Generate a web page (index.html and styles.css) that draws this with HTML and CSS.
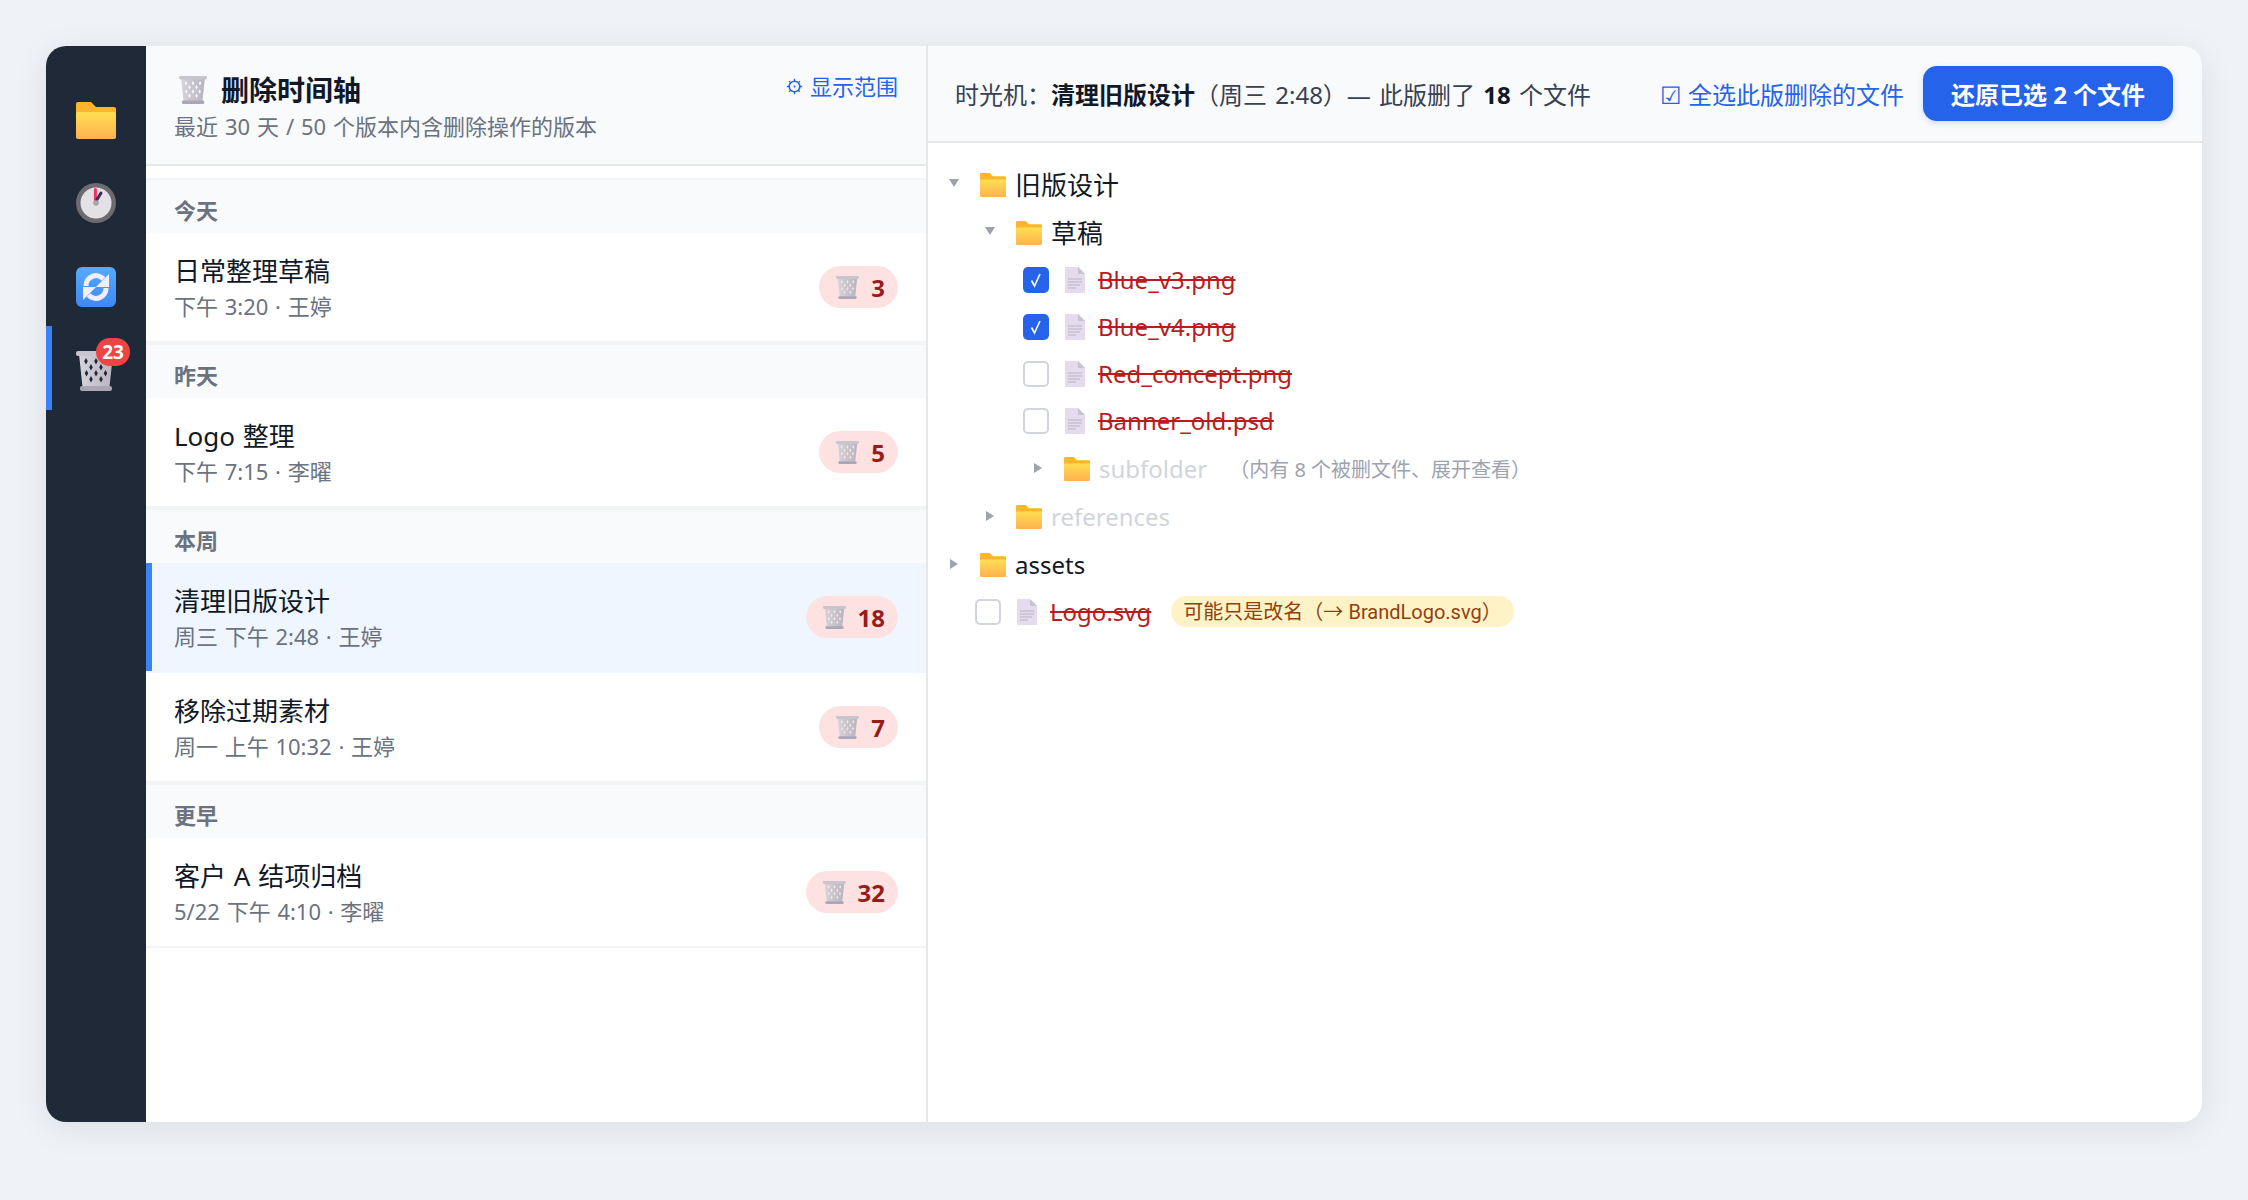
FILE: index.html
```html
<!DOCTYPE html>
<html lang="zh-CN">
<head>
<meta charset="utf-8">
<title>删除时间轴</title>
<link rel="stylesheet" href="styles.css">
</head>
<body>
<svg class="defs" aria-hidden="true">
  <defs>
    <linearGradient id="gf" x1="0" y1="0" x2="0" y2="1"><stop offset="0" stop-color="#ffdf52"/><stop offset="1" stop-color="#ffb24f"/></linearGradient>
    <linearGradient id="gs" x1="0" y1="0" x2="0" y2="1"><stop offset="0" stop-color="#55aaff"/><stop offset="1" stop-color="#4088f2"/></linearGradient>
    <linearGradient id="gt" x1="0" y1="0" x2="1" y2="0"><stop offset="0" stop-color="#d6d3db"/><stop offset="1" stop-color="#b8b4c0"/></linearGradient>
    <symbol id="folder" viewBox="0 0 40 40">
      <path d="M2 3H15L20 8H38a2 2 0 0 1 2 2V16H0V5a2 2 0 0 1 2-2Z" fill="#fbb62e"/>
      <rect y="13" width="40" height="27" rx="2" fill="url(#gf)"/>
    </symbol>
    <symbol id="clock" viewBox="0 0 40 40">
      <circle cx="20" cy="20" r="20" fill="#6d6b70"/>
      <circle cx="20" cy="20" r="15.5" fill="#e3e1e6"/>
      <path d="M19.4 18V6.5" stroke="#f4315b" stroke-width="3" stroke-linecap="round"/>
      <path d="M21 16.5L25 10" stroke="#3a2a66" stroke-width="3" stroke-linecap="round"/>
      <circle cx="20" cy="20" r="2.8" fill="#a6a4aa"/>
    </symbol>
    <symbol id="sync" viewBox="0 0 40 40">
      <rect width="40" height="40" rx="6" fill="url(#gs)"/>
      <path d="M10 19a10 10 0 0 1 17.500-7" fill="none" stroke="#f3eefd" stroke-width="5"/>
      <path d="M33 7V20H20Z" fill="#f3eefd"/>
      <path d="M30 21a10 10 0 0 1-17.500 7" fill="none" stroke="#f3eefd" stroke-width="5"/>
      <path d="M7 33V20H20Z" fill="#f3eefd"/>
    </symbol>
    <symbol id="trash" viewBox="0 0 40 40">
      <path fill-rule="evenodd" fill="url(#gt)" d="M3 3H37L33.500 36H6.500ZM10 7l1.800 3.200-1.800 3.200-1.800-3.200ZM20 7l1.800 3.200-1.800 3.200-1.800-3.200ZM30 7l1.800 3.200-1.800 3.200-1.800-3.200ZM15 13l1.800 3.200-1.800 3.200-1.800-3.200ZM25 13l1.800 3.200-1.800 3.200-1.800-3.200ZM10.500 19l1.800 3.200-1.800 3.200-1.800-3.200ZM20 19l1.800 3.200-1.800 3.200-1.800-3.200ZM29.500 19l1.800 3.200-1.800 3.200-1.800-3.200ZM15 25l1.800 3.200-1.800 3.200-1.800-3.200ZM25 25l1.800 3.200-1.800 3.200-1.800-3.200Z"/>
      <rect x="0" y="0" width="40" height="5" rx="2" fill="#c8c5ce"/>
      <rect x="4" y="35" width="32" height="5" rx="2" fill="#aba6b6"/>
    </symbol>
    <symbol id="file" viewBox="0 0 20 26">
      <path d="M0 0H13L20 7V26H0Z" fill="#e4dcee"/>
      <path d="M13 0L20 7H13Z" fill="#c8c3cf"/>
      <path d="M3 12H17M3 15H17M3 18H15M3 21H11" stroke="#b8b2c2" stroke-width="1.200"/>
    </symbol>
  </defs>
</svg>

<main class="window">
  <nav class="rail">
    <div class="rail-item"><svg class="rail-icon"><use href="#folder"/></svg></div>
    <div class="rail-item"><svg class="rail-icon"><use href="#clock"/></svg></div>
    <div class="rail-item"><svg class="rail-icon"><use href="#sync"/></svg></div>
    <div class="rail-item rail-item-active">
      <svg class="rail-icon"><use href="#trash"/></svg>
      <span class="rail-badge">23</span>
    </div>
  </nav>

  <section class="timeline">
    <header class="tl-head">
      <div class="tl-title-row">
        <h1 class="tl-title"><svg class="tl-title-icon"><use href="#trash"/></svg>删除时间轴</h1>
        <a class="tl-link">
          <svg class="gear" viewBox="0 0 16 16"><circle cx="8" cy="8" r="5" fill="none" stroke="currentColor" stroke-width="1.500"/><circle cx="8" cy="8" r="1" fill="currentColor"/><path d="M8 .8V3M8 13V15.200M.8 8H3M13 8H15.200M3 3L4.200 4.200M11.800 11.800L13 13M3 13L4.200 11.800M11.800 4.200L13 3" stroke="currentColor" stroke-width="1.300"/></svg>
          显示范围
        </a>
      </div>
      <p class="tl-sub">最近 30 天 / 50 个版本内含删除操作的版本</p>
    </header>
    <div class="tl-list">
      <div class="tl-group">今天</div>
      <div class="tl-item">
        <div><div class="tl-name">日常整理草稿</div><div class="tl-meta">下午 3:20 · 王婷</div></div>
        <span class="tl-count"><svg class="tl-count-icon"><use href="#trash"/></svg>3</span>
      </div>
      <div class="tl-group">昨天</div>
      <div class="tl-item">
        <div><div class="tl-name">Logo 整理</div><div class="tl-meta">下午 7:15 · 李曜</div></div>
        <span class="tl-count"><svg class="tl-count-icon"><use href="#trash"/></svg>5</span>
      </div>
      <div class="tl-group">本周</div>
      <div class="tl-item tl-item-active">
        <div><div class="tl-name">清理旧版设计</div><div class="tl-meta">周三 下午 2:48 · 王婷</div></div>
        <span class="tl-count"><svg class="tl-count-icon"><use href="#trash"/></svg>18</span>
      </div>
      <div class="tl-item">
        <div><div class="tl-name">移除过期素材</div><div class="tl-meta">周一 上午 10:32 · 王婷</div></div>
        <span class="tl-count"><svg class="tl-count-icon"><use href="#trash"/></svg>7</span>
      </div>
      <div class="tl-group">更早</div>
      <div class="tl-item">
        <div><div class="tl-name">客户 A 结项归档</div><div class="tl-meta">5/22 下午 4:10 · 李曜</div></div>
        <span class="tl-count"><svg class="tl-count-icon"><use href="#trash"/></svg>32</span>
      </div>
    </div>
  </section>

  <section class="detail">
    <header class="dt-head">
      <div class="dt-summary">时光机&#xFF1A;<b>清理旧版设计</b>&#xFF08;周三 2:48&#xFF09;— 此版删了 <b>18</b> 个文件</div>
      <div class="dt-actions">
        <a class="dt-selectall">☑ 全选此版删除的文件</a>
        <button class="dt-restore">还原已选 2 个文件</button>
      </div>
    </header>
    <div class="tree">
      <div class="row-folder lv0"><i class="arrow-down"></i><svg class="folder"><use href="#folder"/></svg><span class="name-folder">旧版设计</span></div>
      <div class="row-folder lv1"><i class="arrow-down"></i><svg class="folder"><use href="#folder"/></svg><span class="name-folder">草稿</span></div>
      <div class="row-file flv2"><span class="check check-on"><svg viewBox="0 0 26 26"><path d="M8.500 13.500L11.500 19L17 7" fill="none" stroke="#fff" stroke-width="1.600"/></svg></span><svg class="file"><use href="#file"/></svg><span class="name-del">Blue_v3.png</span></div>
      <div class="row-file flv2"><span class="check check-on"><svg viewBox="0 0 26 26"><path d="M8.500 13.500L11.500 19L17 7" fill="none" stroke="#fff" stroke-width="1.600"/></svg></span><svg class="file"><use href="#file"/></svg><span class="name-del">Blue_v4.png</span></div>
      <div class="row-file flv2"><span class="check"></span><svg class="file"><use href="#file"/></svg><span class="name-del">Red_concept.png</span></div>
      <div class="row-file flv2"><span class="check"></span><svg class="file"><use href="#file"/></svg><span class="name-del">Banner_old.psd</span></div>
      <div class="row-folder lv2"><i class="arrow-right"></i><svg class="folder"><use href="#folder"/></svg><span class="name-latin name-muted">subfolder</span><span class="note">&#xFF08;内有 8 个被删文件、展开查看&#xFF09;</span></div>
      <div class="row-folder lv1"><i class="arrow-right"></i><svg class="folder"><use href="#folder"/></svg><span class="name-latin name-muted">references</span></div>
      <div class="row-folder lv0"><i class="arrow-right"></i><svg class="folder"><use href="#folder"/></svg><span class="name-latin">assets</span></div>
      <div class="row-file flv0"><span class="check"></span><svg class="file"><use href="#file"/></svg><span class="name-del">Logo.svg</span><span class="tag">可能只是改名&#xFF08;→ <span class="tag-file">BrandLogo.svg</span>&#xFF09;</span></div>
    </div>
  </section>
</main>
</body>
</html>
```
FILE: styles.css
```css
* { box-sizing: border-box; }
html, body { height: 100%; }
body {
  margin: 0;
  padding: 46px;
  height: 1200px;
  overflow: hidden;
  background: #eff2f6;
  font-family: "Noto Sans", "Noto Sans CJK SC", sans-serif;
  color: #111827;
}
.defs { position: absolute; width: 0; height: 0; }
.window {
  display: flex;
  width: 2156px;
  height: 1076px;
  border-radius: 20px;
  overflow: hidden;
  background: #fff;
  box-shadow: 0 6px 34px rgba(17, 24, 39, .09);
}

/* rail */
.rail {
  flex: none;
  width: 100px;
  padding-top: 28px;
  background: #1f2937;
}
.rail-item {
  position: relative;
  display: flex;
  justify-content: center;
  height: 84px;
  padding-top: 25px;
}
.rail-item-active { box-shadow: inset 6px 0 0 #3b82f6; }
.rail-icon { width: 40px; height: 40px; display: block; }
.rail-badge {
  position: absolute;
  left: 50px;
  top: 12px;
  width: 34px;
  height: 28px;
  border-radius: 14px;
  background: #ef4444;
  color: #fff;
  font-size: 19px;
  font-weight: 700;
  line-height: 28px;
  text-align: center;
}

/* timeline */
.timeline {
  flex: none;
  width: 782px;
  display: flex;
  flex-direction: column;
  border-right: 2px solid #e5e7eb;
}
.tl-head {
  padding: 26px 28px 22px;
  background: #f9fafb;
  border-bottom: 2px solid #e5e7eb;
}
.tl-title-row {
  display: flex;
  justify-content: space-between;
  align-items: flex-start;
}
.tl-title {
  margin: 0;
  display: flex;
  align-items: center;
  font-size: 28px;
  font-weight: 700;
  line-height: 36px;
}
.tl-title-icon { width: 28px; height: 28px; margin: 0 14px 0 5px; }
.tl-link {
  display: flex;
  align-items: center;
  gap: 7px;
  color: #2563eb;
  font-size: 22px;
  line-height: 28px;
}
.gear { width: 17px; height: 17px; }
.tl-sub {
  margin: 2px 0 0;
  font-size: 22px;
  line-height: 32px;
  color: #6b7280;
  word-spacing: 1.2px;
}
.tl-list { padding-top: 12px; }
.tl-group {
  height: 55px;
  padding: 15px 28px 0;
  border-top: 2px solid #f3f4f6;
  background: #f9fafb;
  font-size: 22px;
  font-weight: 700;
  line-height: 30px;
  color: #6b7280;
}
.tl-item {
  display: flex;
  justify-content: space-between;
  align-items: center;
  height: 110px;
  padding: 0 28px;
  border-bottom: 2px solid #f3f4f6;
}
.tl-item-active {
  background: #eff6ff;
  border-bottom-color: #eff6ff;
  box-shadow: inset 6px 0 0 #3b82f6;
}
.tl-name { font-size: 26px; line-height: 34px; color: #111827; word-spacing: 1px; }
.tl-meta { margin-top: 4px; font-size: 22px; line-height: 28px; color: #6b7280; word-spacing: 1px; }
.tl-count {
  display: flex;
  align-items: center;
  height: 42px;
  padding: 0 13px 0 17px;
  border-radius: 21px;
  background: #fee2e2;
  color: #991b1b;
  font-size: 24px;
  font-weight: 700;
}
.tl-count-icon { width: 23px; height: 23px; margin-right: 12px; }

/* detail */
.detail { flex: 1; display: flex; flex-direction: column; min-width: 0; }
.dt-head {
  display: flex;
  justify-content: space-between;
  align-items: center;
  height: 97px;
  padding: 0 29px 0 27px;
  background: #f9fafb;
  border-bottom: 2px solid #e5e7eb;
}
.dt-summary { font-size: 24px; color: #374151; word-spacing: 2px; }
.dt-summary b { color: #111827; font-weight: 700; }
.dt-actions { display: flex; align-items: center; gap: 19px; }
.dt-selectall { font-size: 24px; color: #2563eb; }
.dt-restore {
  width: 250px;
  height: 55px;
  border: 0;
  border-radius: 14px;
  background: #2563eb;
  color: #fff;
  font: 700 24px "Noto Sans", "Noto Sans CJK SC", sans-serif;
  box-shadow: 0 2px 6px rgba(37, 99, 235, .2);
}
.tree { padding: 17px 0 0 18px; }
.row-folder { display: flex; align-items: center; height: 48px; }
.row-file { display: flex; align-items: center; height: 47px; }
.lv0 { padding-left: 0; }
.lv1 { padding-left: 36px; }
.lv2 { padding-left: 84px; }
.flv0 { padding-left: 29px; }
.flv2 { padding-left: 77px; }
.arrow-down, .arrow-right { flex: none; width: 16px; height: 10px; margin-right: 18px; position: relative; }
.arrow-down::before {
  content: "";
  position: absolute;
  left: 3px;
  top: 0;
  border-style: solid;
  border-width: 8px 5px 0;
  border-color: #9ca3af transparent transparent;
}
.arrow-right::before {
  content: "";
  position: absolute;
  left: 4px;
  top: 0;
  border-style: solid;
  border-width: 5px 0 5px 8px;
  border-color: transparent transparent transparent #9ca3af;
}
.folder { flex: none; width: 26px; height: 26px; margin-right: 9px; }
.name-folder { font-size: 26px; color: #111827; }
.name-latin { font-size: 24px; color: #111827; }
.name-muted { color: #d1d5db; }
.note { margin-left: 22px; font-size: 20px; color: #9ca3af; }
.check {
  flex: none;
  width: 26px;
  height: 26px;
  margin-right: 16px;
  border: 2px solid #d1d5db;
  border-radius: 5px;
  background: #fff;
}
.check svg { display: block; width: 26px; height: 26px; }
.check-on { border: 0; background: #2563eb; }
.file { flex: none; width: 20px; height: 26px; margin-right: 13px; }
.name-del { font-size: 24px; color: #b91c1c; text-decoration: line-through; }
.tag {
  margin-left: 20px;
  height: 31px;
  padding: 0 12px;
  border-radius: 16px;
  background: #fef3c7;
  color: #92400e;
  font-size: 20px;
  line-height: 31px;
}
.tag-file { font-family: Roboto, "Noto Sans", sans-serif; }
```
